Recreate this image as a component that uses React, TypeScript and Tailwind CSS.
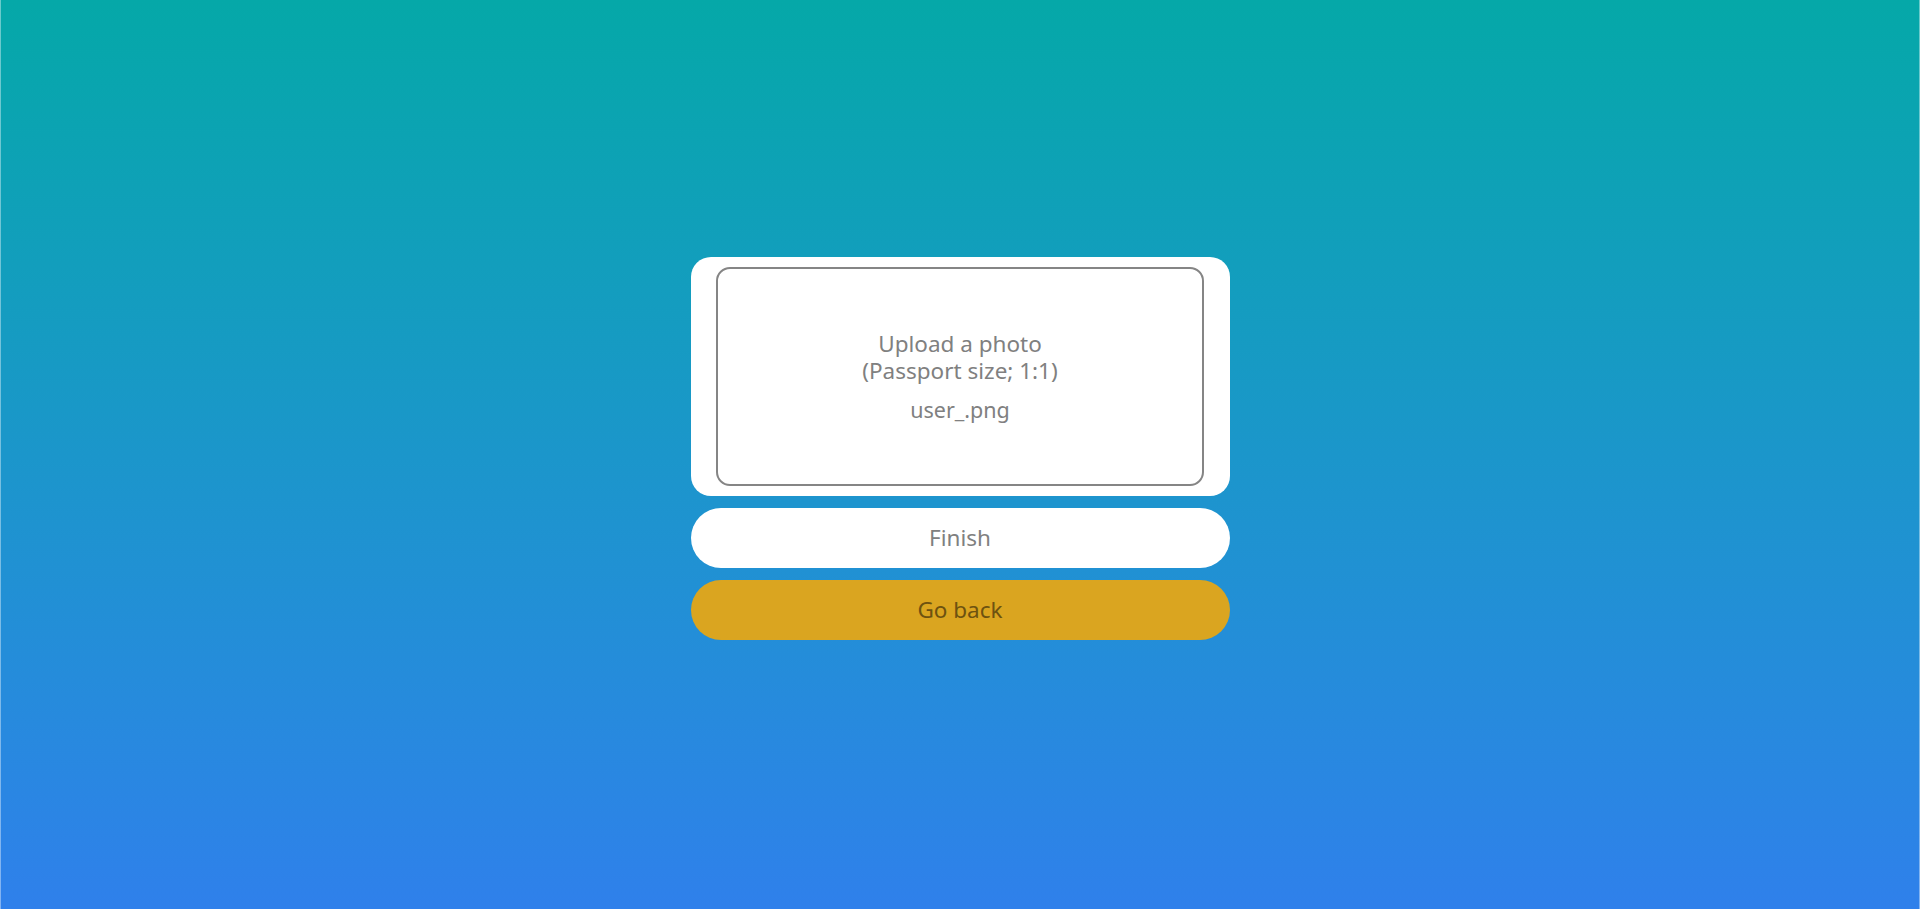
import React from "react";

export default function App() {
  return (
    <div
      className="w-full h-[909px] flex items-center justify-center pb-[12px] bg-gradient-to-b from-[#05a8a8] to-[#2f80eb] border-x border-white/40"
      style={{ fontFamily: '"Noto Sans", "Open Sans", sans-serif' }}
    >
      <div className="w-[539px] flex flex-col gap-[12px]">
        <div className="bg-white rounded-[20px] h-[239px] py-[10px] flex justify-center">
          <div className="w-[488px] border-2 border-[#858585] rounded-[14px] flex flex-col items-center justify-center text-[#808080]">
            <div className="text-[22.5px] leading-[27px] text-center">
              Upload a photo
              <br />
              (Passport size; 1:1)
            </div>
            <div className="text-[21.5px] leading-[27px] mt-[12px]">user_.png</div>
          </div>
        </div>
        <button className="h-[60px] w-full rounded-full bg-white text-[#808080] text-[22.5px]">
          Finish
        </button>
        <button className="h-[60px] w-full rounded-full bg-[#daa520] text-[#6d5210] text-[22.5px]">
          Go back
        </button>
      </div>
    </div>
  );
}
